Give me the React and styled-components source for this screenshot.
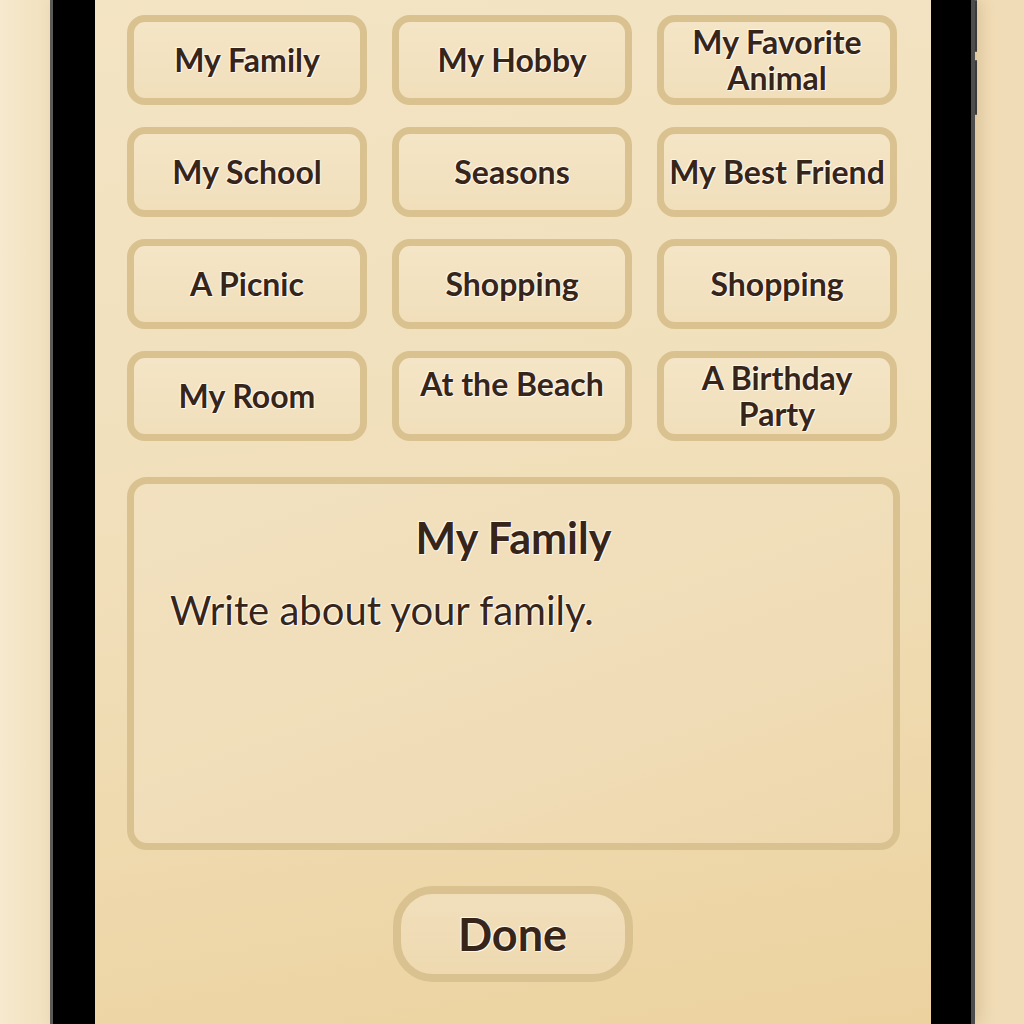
import styled, { createGlobalStyle } from "styled-components";

const GlobalStyle = createGlobalStyle`
    html, body {
        margin: 0;
        padding: 0;
        height: 100%;
        overflow: hidden;
    }
    body {
        background: linear-gradient(90deg, #f6e9cd 0%, #f1e0bd 5%, #f0dcb6 100%);
        font-family: Lato, "Open Sans", sans-serif;
    }
`;

const Stage = styled.div`
    display: flex;
    padding-left: 50px;
    height: 1024px;
`;

const Phone = styled.div`
    position: relative;
    width: 925px;
    height: 1024px;
    box-sizing: border-box;
    background: #000;
    border-left: 3px solid #5a5a5a;
    border-right: 4px solid #4d4d4d;
    padding: 0 40px 0 42px;
    box-shadow: 6px 0 14px rgba(120, 90, 40, 0.18);
`;

const SideKey = styled.span`
    position: absolute;
    right: -6px;
    top: ${(p) => p.$top}px;
    width: 2px;
    height: ${(p) => p.$h}px;
    background: #3a3a3a;
    border-radius: 1px;
`;

const Screen = styled.div`
    height: 100%;
    box-sizing: border-box;
    padding: 15px 31px 0 32px;
    display: flex;
    flex-direction: column;
    background: linear-gradient(170deg, #f3e4c4 0%, #f1dfba 50%, #ecd29f 100%);
`;

const TopicGrid = styled.div`
    display: grid;
    grid-template-columns: repeat(3, 240px);
    grid-auto-rows: 90px;
    column-gap: 25px;
    row-gap: 22px;
`;

const Label = styled.span`
    color: #37251a;
    font-weight: 700;
    text-shadow: 0 0 2px #fffaf0, 0 0 1px #fffaf0, 1px 1px 0 #fff6e4, -1px -1px 0 #fff6e4;
`;

const Line = styled.span`
    display: block;
    line-height: 36px;
`;

const Topic = styled.button`
    display: flex;
    align-items: ${(p) => (p.$raised ? "flex-start" : "center")};
    justify-content: center;
    box-sizing: border-box;
    padding: ${(p) => (p.$raised ? "7px 4px 0" : "0 4px")};
    border: 7px solid #d9c290;
    border-radius: 18px;
    background: linear-gradient(180deg, #f4e5c6 0%, #f1dfbb 100%);
    font-family: Lato, "Open Sans", sans-serif;
    font-size: 32px;
    line-height: 38px;
    text-align: center;
    white-space: nowrap;
    cursor: pointer;
`;

const PromptCard = styled.section`
    margin-top: 36px;
    height: 373px;
    box-sizing: border-box;
    border: 7px solid #d9c290;
    border-radius: 20px;
    background: linear-gradient(160deg, #f2e1bf 0%, #f0ddb8 60%, #eed7ac 100%);
    padding: 28px 36px;
    display: flex;
    flex-direction: column;
`;

const PromptTitle = styled(Label)`
    align-self: center;
    font-size: 43px;
    line-height: 52px;
`;

const PromptText = styled(Label)`
    font-weight: 400;
    font-size: 40px;
    line-height: 48px;
    margin-top: 22px;
`;

const DoneButton = styled.button`
    align-self: center;
    margin-top: 36px;
    margin-right: 2px;
    width: 240px;
    height: 96px;
    box-sizing: border-box;
    border: 8px solid #d9c290;
    border-radius: 40px;
    background: linear-gradient(180deg, #f1dfbc 0%, #eed9b0 100%);
    font-family: Lato, "Open Sans", sans-serif;
    font-size: 45px;
    cursor: pointer;
`;

const topics = [
    { text: "My Family" },
    { text: "My Hobby" },
    { text: ["My Favorite", "Animal"] },
    { text: "My School" },
    { text: "Seasons" },
    { text: "My Best Friend" },
    { text: "A Picnic" },
    { text: "Shopping" },
    { text: "Shopping" },
    { text: "My Room" },
    { text: "At the Beach", raised: true },
    { text: ["A Birthday", "Party"] },
];

const App = () => {
    return (
        <>
            <GlobalStyle />
            <Stage>
                <Phone>
                    <SideKey $top={0} $h={52} />
                    <SideKey $top={60} $h={55} />
                    <Screen>
                        <TopicGrid>
                            {topics.map((t, i) => (
                                <Topic key={i} $raised={t.raised}>
                                    <Label>
                                        {Array.isArray(t.text)
                                            ? t.text.map((l) => <Line key={l}>{l}</Line>)
                                            : t.text}
                                    </Label>
                                </Topic>
                            ))}
                        </TopicGrid>

                        <PromptCard>
                            <PromptTitle>My Family</PromptTitle>
                            <PromptText>Write about your family.</PromptText>
                        </PromptCard>

                        <DoneButton>
                            <Label>Done</Label>
                        </DoneButton>
                    </Screen>
                </Phone>
            </Stage>
        </>
    );
};

export default App;
